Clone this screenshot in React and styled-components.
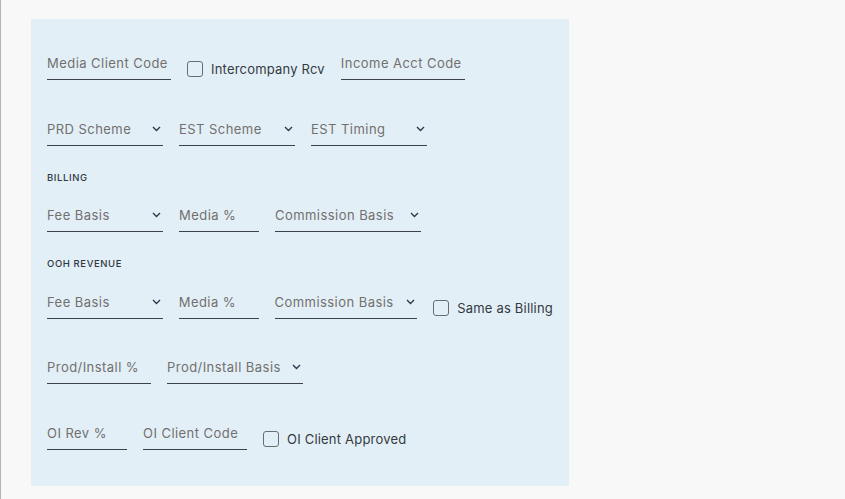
import React from 'react';
import styled, { createGlobalStyle } from 'styled-components';

const GlobalStyle = createGlobalStyle`
  html, body {
    margin: 0;
    background: #f8f8f8;
  }
  * {
    box-sizing: border-box;
  }
`;

const Page = styled.div`
  min-height: 100vh;
  border-left: 1px solid #b4b4b4;
  padding: 19px 0 0 30px;
  font-family: Inter, "Noto Sans", sans-serif;
`;

const Panel = styled.section`
  width: 538px;
  height: 467px;
  background: #e3eff7;
  padding: 27px 16px 0;
`;

const Row = styled.div`
  display: flex;
  align-items: flex-end;
  gap: 16px;
  margin-bottom: ${(p) => p.$after ?? 32}px;
`;

const SectionTitle = styled.div`
  font-size: 9.5px;
  line-height: 12px;
  font-weight: 500;
  letter-spacing: 0.6px;
  color: #2f3742;
  text-transform: uppercase;
  margin-bottom: ${(p) => p.$after ?? 14}px;
`;

const FieldBox = styled.div`
  width: ${(p) => p.$w}px;
  height: 34px;
  display: flex;
  align-items: flex-end;
  justify-content: space-between;
  padding: 0 2px 8px 0;
  border-bottom: 1px solid #3c4248;
`;

const FieldLabel = styled.span`
  font-size: 13px;
  line-height: 16px;
  letter-spacing: 0.45px;
  color: #72706e;
  white-space: nowrap;
`;

const Chevron = styled.svg`
  width: 9px;
  height: 6px;
  margin-bottom: 5px;
  flex: none;
`;

const CheckRow = styled.label`
  display: flex;
  align-items: center;
  gap: 8px;
  height: 16px;
  margin-bottom: 3px;
`;

const Box = styled.span`
  width: 16px;
  height: 16px;
  border: 1.5px solid #6a6c70;
  border-radius: 3px;
  flex: none;
`;

const CheckText = styled.span`
  font-size: 13px;
  line-height: 16px;
  letter-spacing: 0.2px;
  color: #343a40;
  white-space: nowrap;
`;

const Field = ({ label, w, select }) => (
  <FieldBox $w={w}>
    <FieldLabel>{label}</FieldLabel>
    {select && (
      <Chevron viewBox="0 0 9 6">
        <path d="M1 1l3.5 3.5L8 1" fill="none" stroke="#2b3a4c" strokeWidth="1.4" />
      </Chevron>
    )}
  </FieldBox>
);

const Check = ({ label }) => (
  <CheckRow>
    <Box />
    <CheckText>{label}</CheckText>
  </CheckRow>
);

export default function App() {
  return (
    <>
      <GlobalStyle />
      <Page>
        <Panel>
          <Row>
            <Field label="Media Client Code" w={124} />
            <Check label="Intercompany Rcv" />
            <Field label="Income Acct Code" w={124} />
          </Row>
          <Row $after={26}>
            <Field label="PRD Scheme" w={116} select />
            <Field label="EST Scheme" w={116} select />
            <Field label="EST Timing" w={116} select />
          </Row>

          <SectionTitle>Billing</SectionTitle>
          <Row $after={26}>
            <Field label="Fee Basis" w={116} select />
            <Field label="Media %" w={80} />
            <Field label="Commission Basis" w={146} select />
          </Row>

          <SectionTitle $after={15}>OOH Revenue</SectionTitle>
          <Row $after={31}>
            <Field label="Fee Basis" w={116} select />
            <Field label="Media %" w={80} />
            <Field label="Commission Basis" w={143} select />
            <Check label="Same as Billing" />
          </Row>

          <Row>
            <Field label="Prod/Install %" w={104} />
            <Field label="Prod/Install Basis" w={136} select />
          </Row>
          <Row>
            <Field label="OI Rev %" w={80} />
            <Field label="OI Client Code" w={104} />
            <Check label="OI Client Approved" />
          </Row>
        </Panel>
      </Page>
    </>
  );
}
